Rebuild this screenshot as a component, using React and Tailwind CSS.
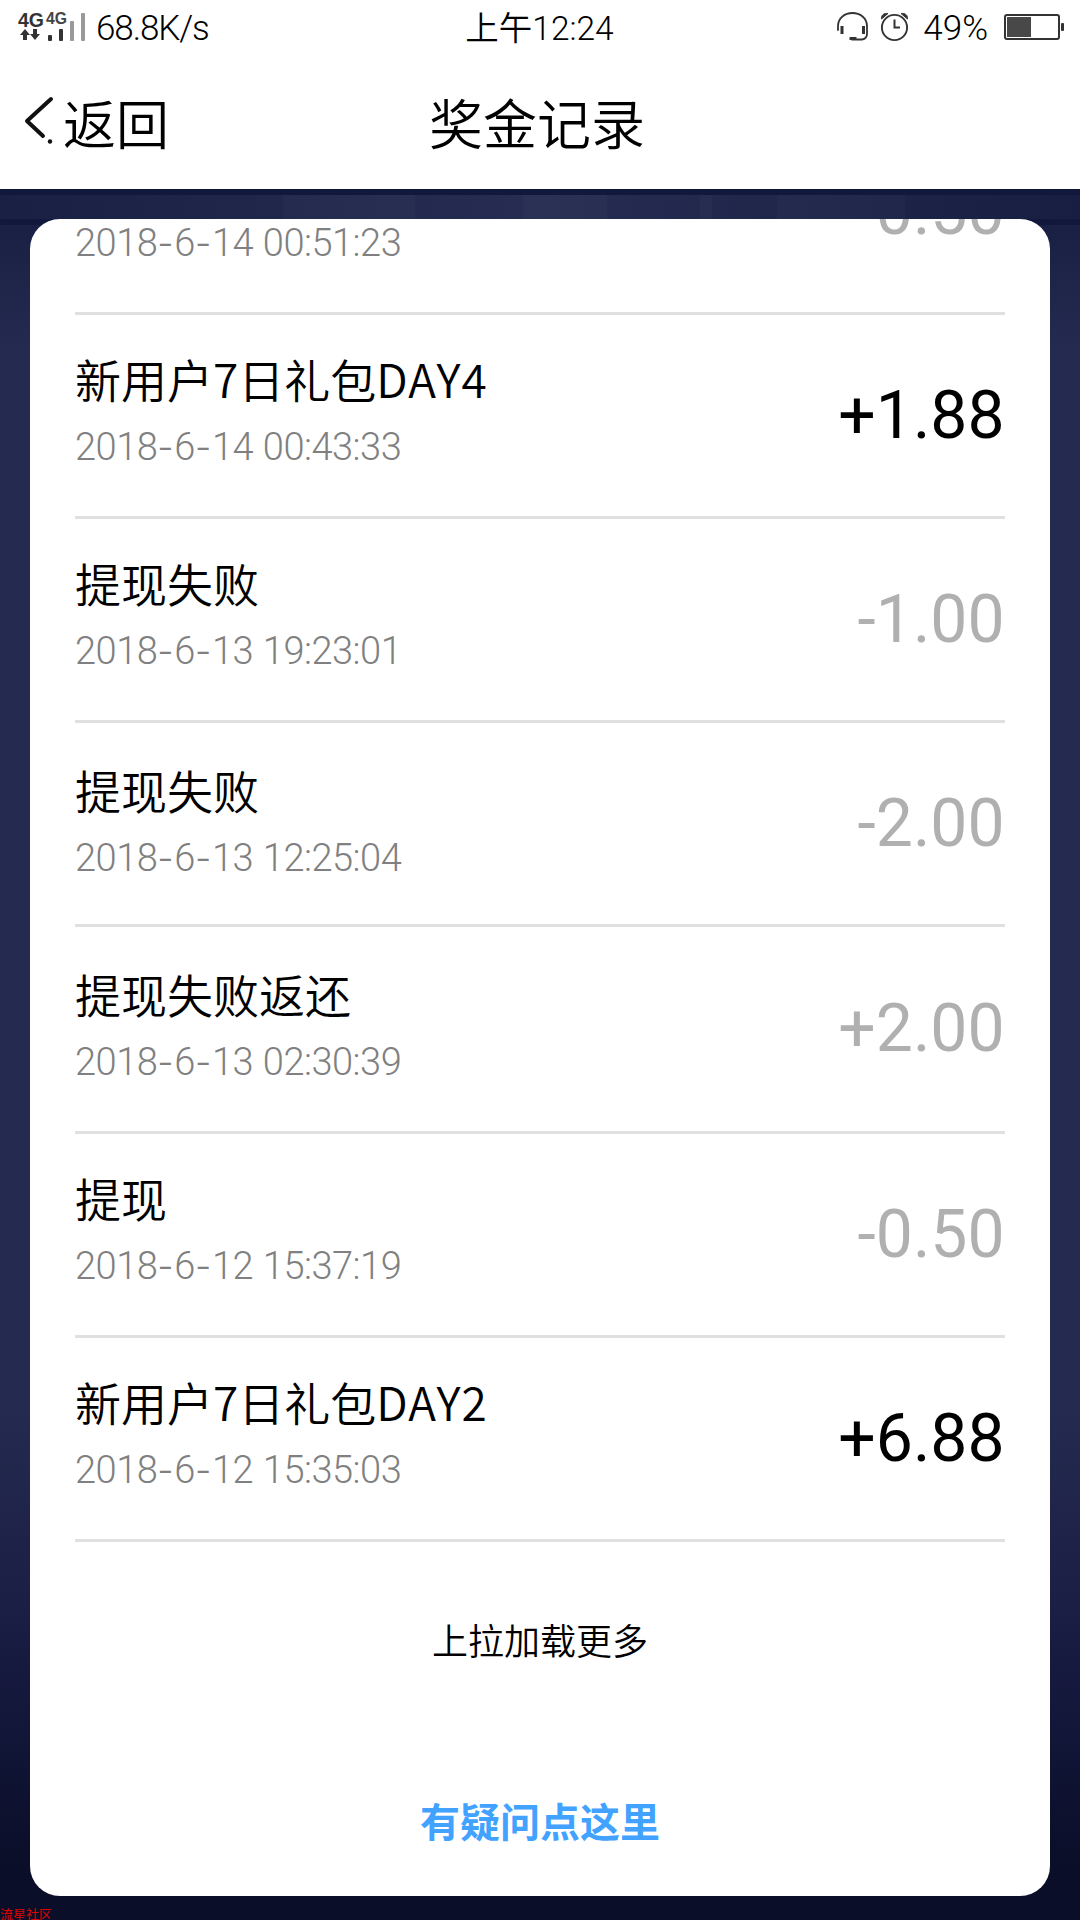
const rows = [
  { title: "新用户7日礼包", suffix: "DAY4", date: "2018-6-14 00:43:33", amount: "+1.88", dark: true, h: "h-[204px]", pad: "pt-[28px]" },
  { title: "提现失败", date: "2018-6-13 19:23:01", amount: "-1.00", h: "h-[204px]", pad: "pt-[28px]" },
  { title: "提现失败", date: "2018-6-13 12:25:04", amount: "-2.00", h: "h-[204px]", pad: "pt-[31px]" },
  { title: "提现失败返还", date: "2018-6-13 02:30:39", amount: "+2.00", h: "h-[207px]", pad: "pt-[31px]" },
  { title: "提现", date: "2018-6-12 15:37:19", amount: "-0.50", h: "h-[204px]", pad: "pt-[28px]" },
  { title: "新用户7日礼包", suffix: "DAY2", date: "2018-6-12 15:35:03", amount: "+6.88", dark: true, h: "h-[204px]", pad: "pt-[28px]" },
];

const MIXED = "font-['Roboto','Noto_Sans_CJK_SC',sans-serif]";

function DateText({ value }) {
  return (
    <div className="h-[60px] font-['Roboto',sans-serif] text-[38px] leading-[61px] font-[340] tracking-[-0.5px] [word-spacing:1px] whitespace-pre text-[#808080]">
      {value.split(/(-)/).map((part, i) =>
        part === "-" ? (
          <span key={i} className="inline-block h-[60px] w-[17px] align-top font-['Inter',sans-serif] text-[36px] leading-[60px]">-</span>
        ) : (
          <span key={i}>{part}</span>
        )
      )}
    </div>
  );
}

function Amount({ dark, className, children }) {
  return (
    <div className={`${className} pr-[0.5px] font-['Roboto',sans-serif] text-[66px] leading-[78px] ${dark ? "text-black" : "text-[#b0b0b0]"}`}>
      {children}
    </div>
  );
}

function Row({ title, suffix, date, amount, dark, h, pad }) {
  return (
    <div className={`${h} flex shrink-0 justify-between border-b-[3px] border-[#e0e0e0]`}>
      <div className={`${pad} whitespace-nowrap`}>
        <div className="h-[74px] text-[46px] leading-[70px] font-[350] text-black">
          {title}
          {suffix && <span className="tracking-[1.1px]">{suffix}</span>}
        </div>
        <DateText value={date} />
      </div>
      <Amount dark={dark} className="self-center">{amount}</Amount>
    </div>
  );
}

function SignalIcon() {
  return (
    <svg width="70" height="32" viewBox="0 0 70 32" className="overflow-visible">
      <text x="0" y="14.500" fontSize="19.500" fontWeight="700" fontFamily="Liberation Sans" fill="#333" textLength="26" lengthAdjust="spacingAndGlyphs">4G</text>
      <text x="28" y="12" fontSize="16" fontWeight="700" fontFamily="Liberation Sans" fill="#444" textLength="21" lengthAdjust="spacingAndGlyphs">4G</text>
      <path d="M7 17l5 6H9v5H5v-5H2zM17 28l-5-6h3v-5h4v5h3z" fill="#333" />
      <rect x="30" y="23" width="4" height="6" rx="1" fill="#333" />
      <rect x="41" y="17" width="4" height="12" rx="1" fill="#333" />
      <rect x="52" y="9" width="4" height="20" rx="1" fill="#999" />
      <rect x="63" y="1" width="4" height="28" rx="1" fill="#999" />
    </svg>
  );
}

function HeadsetIcon() {
  return (
    <svg width="32" height="30" viewBox="0 0 32 30" fill="none" stroke="#333" strokeWidth="1.8" strokeLinecap="round">
      <path d="M1 18v-4C1 6 8 1 15.500 1S30 6 30 14v8c0 3-2 5-5 5.500H15" />
      <path d="M5 14v8M26.500 14v8M12.500 26.500h7" strokeWidth="3" strokeLinecap="butt" />
    </svg>
  );
}

function AlarmIcon() {
  return (
    <svg width="30" height="30" viewBox="0 0 30 30" fill="none" stroke="#333" strokeWidth="1.9">
      <circle cx="14.500" cy="15.500" r="12.600" />
      <path d="M14.500 7.500v8h5.500" strokeWidth="2" />
      <path d="M1.500 7C1 3 4 1 8 1.500zM27.500 7C28 3 25 1 21 1.500z" fill="#333" strokeWidth="1" />
    </svg>
  );
}

function BatteryIcon() {
  return (
    <svg width="62" height="28" viewBox="0 0 62 28">
      <rect x="1" y="1" width="54" height="24" rx="2" fill="none" stroke="#333" strokeWidth="2" />
      <rect x="3" y="3" width="24" height="20" fill="#484848" />
      <rect x="57" y="9" width="3" height="8" rx="1" fill="#333" />
    </svg>
  );
}

export default function App() {
  return (
    <div className="flex h-[1920px] w-[1080px] flex-col overflow-hidden bg-white font-['Noto_Sans_CJK_SC',sans-serif] text-black">
      <div className="grid h-[60px] shrink-0 grid-cols-3 pt-[12px] pr-[14px] pl-[18px]">
        <div className="flex">
          <SignalIcon />
          <span className="-mt-px ml-[8px] font-['Roboto',sans-serif] text-[35px] leading-[36px] font-[340] tracking-[-1.1px]">68.8K/s</span>
        </div>
        <div className={`-mt-[3px] mr-[5px] flex justify-center text-[33.500px] leading-[40px] font-[340] ${MIXED}`}>上午12:24</div>
        <div className="flex justify-end">
          <HeadsetIcon />
          <span className="ml-[11px]"><AlarmIcon /></span>
          <span className="-mt-px mr-[16px] ml-[13px] font-['Roboto',sans-serif] text-[35px] leading-[36px] font-[340]">49%</span>
          <span className="mt-[2px]"><BatteryIcon /></span>
        </div>
      </div>
      <div className="grid h-[129px] shrink-0 grid-cols-[1fr_auto_1fr] items-start pr-[30px] pl-[24px]">
        <div className="flex pt-[22px]">
          <svg className="mt-[13px]" width="32" height="52" viewBox="0 0 32 52" fill="none" stroke="#111" strokeWidth="4" strokeLinecap="round" strokeLinejoin="round">
            <path d="M27 4L3 26L19 41" />
            <circle cx="26" cy="46.500" r="2.200" fill="#111" stroke="none" />
          </svg>
          <span className="ml-[7px] text-[53px] leading-[80px] font-[350]">返回</span>
        </div>
        <div className="pt-[22px] text-[54px] leading-[80px] font-[350]">奖金记录</div>
        <div />
      </div>
      <div className="flex min-h-0 flex-1 flex-col bg-[linear-gradient(to_bottom,#252b50_70%,#1b1e45_82%,#13173a_88%,#0a0e28_97%)]">
        <div className="h-[6px] shrink-0 bg-[#12183c]" />
        <div className="flex h-[24px] shrink-0 bg-gradient-to-r from-[#1a2044] via-[#272d52] to-[#181e42]">
          <div className="ml-[283px] w-[132px] bg-white/[0.02]" />
          <div className="ml-[108px] w-[84px] bg-white/[0.02]" />
          <div className="ml-[93px] w-[12px] bg-white/[0.02]" />
          <div className="ml-[65px] w-[128px] bg-white/[0.02]" />
        </div>
        <div className="flex min-h-0 flex-1 flex-col bg-[linear-gradient(to_bottom,#12183c_6px,#1a2044_6px,#252b5000_130px)] px-[30px] pb-[24px]">
          <div className="flex min-h-0 flex-1 flex-col overflow-hidden rounded-[30px] bg-white px-[45px]">
            <div className="flex shrink-0 flex-col">
              <div className="flex h-[96px] items-start justify-between border-b-[3px] border-[#e0e0e0]">
                <div className="-mt-[6px]"><DateText value="2018-6-14 00:51:23" /></div>
                <Amount className="-mt-[46px]">-0.50</Amount>
              </div>
              {rows.map((r, i) => <Row key={i} {...r} />)}
            </div>
            <div className="pt-[67px] text-center text-[36px] leading-[60px] font-[350]">上拉加载更多</div>
            <div className="pt-[121px] text-center text-[40px] leading-[60px] font-bold text-[#42a2ff]">有疑问点这里</div>
          </div>
        </div>
      </div>
      <div className="absolute top-[1906px] left-0 h-[14px] overflow-hidden text-[13px] leading-[16px] whitespace-nowrap text-[#e00000]">流星社区</div>
    </div>
  );
}
